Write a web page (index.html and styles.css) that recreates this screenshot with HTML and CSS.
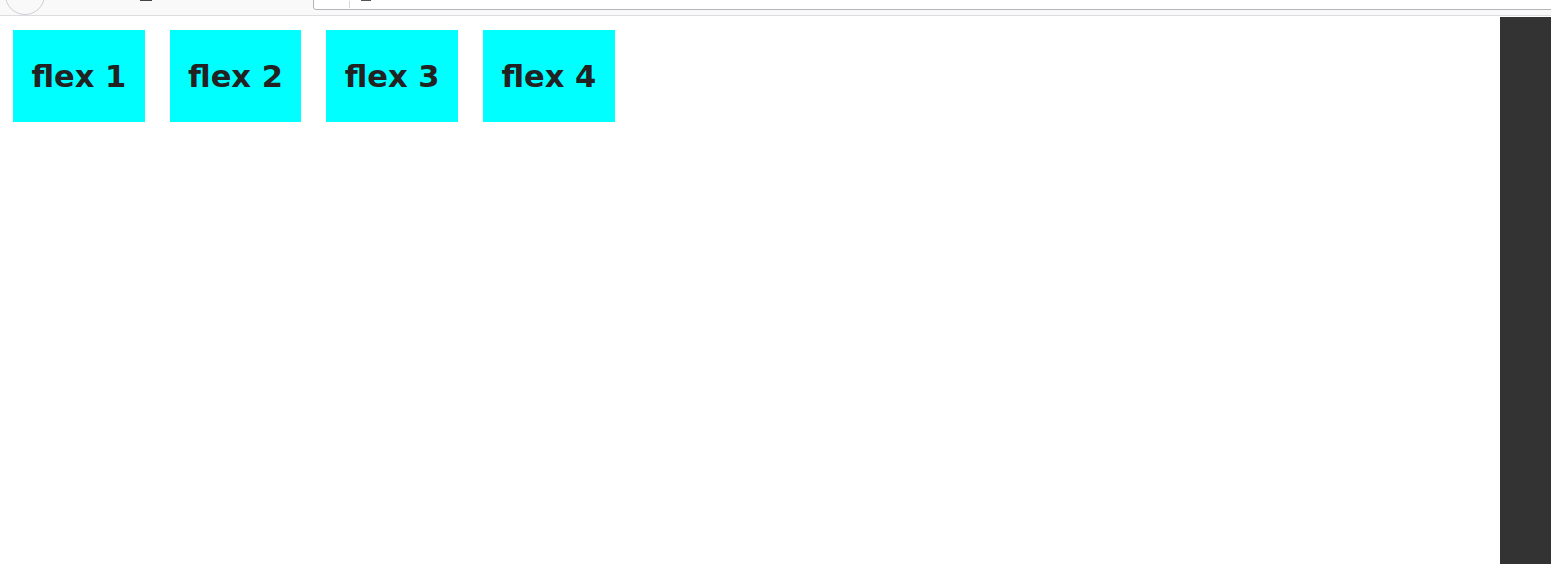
FILE: index.html
```html
<!DOCTYPE html>
<html>
<head>
<meta charset="utf-8">
<link rel="stylesheet" href="styles.css">
</head>
<body>
<div class="chrome">
  <div class="back-btn"></div>
  <div class="dash"></div>
  <div class="urlbar">
    <div class="url-sep"></div>
    <div class="url-dash"></div>
  </div>
</div>
<div class="main">
  <div class="page">
    <div class="flex">
      <div class="item">flex 1</div>
      <div class="item">flex 2</div>
      <div class="item">flex 3</div>
      <div class="item">flex 4</div>
    </div>
  </div>
  <div class="panel"></div>
</div>
</body>
</html>
```
FILE: styles.css
```css
html, body {
  margin: 0;
  padding: 0;
  height: 100%;
  background: #ffffff;
  overflow: hidden;
}
body {
  display: flex;
  flex-direction: column;
  font-family: "DejaVu Sans", Verdana, sans-serif;
}
.chrome {
  position: relative;
  height: 15px;
  background: #f9f9fa;
  border-bottom: 1px solid #dcdde0;
  flex: none;
  overflow: hidden;
}
.back-btn {
  position: absolute;
  left: 5px;
  top: -25px;
  width: 38px;
  height: 38px;
  border: 1px solid #cfcfd2;
  border-radius: 50%;
  background: #f9f9fa;
}
.dash {
  position: absolute;
  left: 140px;
  top: 0;
  width: 12px;
  height: 1px;
  background: #444;
}
.urlbar {
  position: absolute;
  left: 313px;
  top: -10px;
  right: -10px;
  height: 18px;
  background: #fff;
  border: 1px solid #b5b5b8;
  border-radius: 3px;
}
.url-sep {
  position: absolute;
  left: 35px;
  top: 10px;
  width: 1px;
  height: 7px;
  background: #d7d7db;
}
.url-dash {
  position: absolute;
  left: 47px;
  top: 9px;
  width: 10px;
  height: 1px;
  background: #555;
}
.main {
  flex: 1;
  display: flex;
  margin-top: 1px;
}
.page {
  flex: 1;
  padding: 13px 0 0 13px;
}
.flex {
  display: flex;
  gap: 25px;
}
.item {
  width: 131.67px;
  height: 92px;
  background: #00ffff;
  color: #222222;
  font-weight: bold;
  font-size: 30.5px;
  display: flex;
  align-items: center;
  justify-content: center;
}
.panel {
  width: 51px;
  background: #333333;
  flex: none;
}
```
